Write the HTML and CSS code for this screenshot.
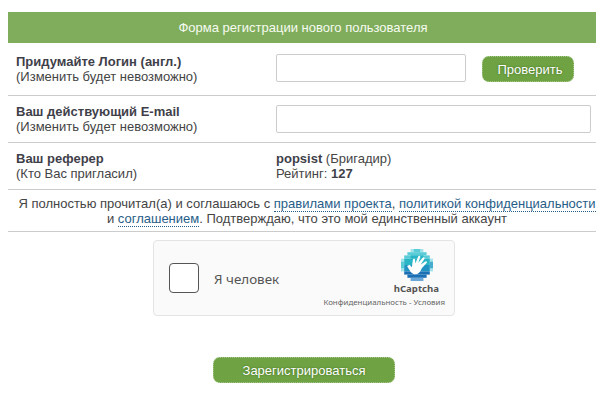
FILE: index.html
```html
<!DOCTYPE html>
<html lang="ru">
<head>
<meta charset="utf-8">
<title>Регистрация</title>
<link rel="stylesheet" href="styles.css">
</head>
<body>
<form class="form">
  <div class="title">Форма регистрации нового пользователя</div>
  <div class="row row-login">
    <div class="label"><b>Придумайте Логин (англ.)</b><br>(Изменить будет невозможно)</div>
    <div class="field field-login">
      <input class="input input-short" type="text">
      <button class="btn btn-check" type="button">Проверить</button>
    </div>
  </div>
  <div class="row row-mail">
    <div class="label"><b>Ваш действующий E-mail</b><br>(Изменить будет невозможно)</div>
    <div class="field"><input class="input input-long" type="text"></div>
  </div>
  <div class="row row-ref">
    <div class="label"><b>Ваш реферер</b><br>(Кто Вас пригласил)</div>
    <div class="value"><b>popsist</b> (Бригадир)<br>Рейтинг: <b>127</b></div>
  </div>
  <div class="agree">Я полностью прочитал(а) и соглашаюсь с <a href="#">правилами проекта</a>, <a href="#">политикой конфиденциальности</a><br>и <a href="#">соглашением</a>. Подтверждаю, что это мой единственный аккаунт</div>
  <div class="captcha">
    <span class="check"></span>
    <span class="human">Я человек</span>
    <div class="brand">
      <svg class="logo" viewBox="0 0 10 10" width="32" height="32" aria-hidden="true">
        <g fill="#a5e3ea"><rect x="3" y="0" width="4" height="1"/><rect x="0" y="3" width="1" height="4"/><rect x="9" y="3" width="1" height="4"/></g>
        <g fill="#5accd8"><rect x="2" y="1" width="6" height="1"/><rect x="1" y="2" width="8" height="1"/><rect x="4" y="0" width="2" height="1"/><rect x="0" y="4" width="1" height="2"/></g>
        <g fill="#28b5c6"><rect x="1" y="3" width="8" height="2"/><rect x="3" y="2" width="4" height="1"/></g>
        <g fill="#1f93c2"><rect x="1" y="5" width="8" height="2"/><rect x="9" y="4" width="1" height="2" opacity=".7"/></g>
        <g fill="#1a6fb5"><rect x="1" y="7" width="8" height="1"/><rect x="2" y="8" width="6" height="1"/></g>
        <rect x="3" y="9" width="4" height="1" fill="#6aa6d8"/>
        <path fill="#fff" d="M1.9 5.3 2.7 4.9 3.4 5.7 3.7 3.4C3.8 2.9 4.4 3 4.4 3.5L4.5 4.5 5.4 2.3C5.6 1.9 6.2 2.1 6 2.6L5.4 4.3 6.8 2.7C7.1 2.4 7.6 2.75 7.3 3.1L6.1 4.9 7.6 3.9C8 3.65 8.3 4.1 8 4.4L6.5 6C6 7.4 5 8.2 3.9 7.8 3.1 7.5 2.8 6.8 2.4 6.2Z"/>
      </svg>
      <div class="brand-name">hCaptcha</div>
      <div class="brand-links">Конфиденциальность - Условия</div>
    </div>
  </div>
  <div class="submit"><button class="btn btn-submit" type="button">Зарегистрироваться</button></div>
</form>
</body>
</html>
```
FILE: styles.css
```css
html, body { margin: 0; padding: 0; background: #fff; }
body { width: 607px; height: 403px; overflow: hidden; }
.form {
  margin: 12px 11px 0 8px;
  font: 13px/15px "Liberation Sans", Arial, sans-serif;
  color: #444;
}
.title {
  height: 31px;
  line-height: 31px;
  padding-left: 2px;
  background: #80ad5c;
  color: #f6fbf0;
  text-align: center;
}
.row {
  display: grid;
  grid-template-columns: 260px 1fr;
  align-items: center;
  padding-left: 8px;
  border-bottom: 1px solid #ccc;
  box-sizing: border-box;
}
.row-login { height: 53px; }
.row-mail, .row-ref { height: 47px; }
.label b, .value b { color: #3f3f4a; }
.field { display: flex; align-items: center; }
.field-login { margin-bottom: 2px; }
.input {
  box-sizing: border-box;
  height: 28px;
  margin: 0;
  padding: 0 6px;
  border: 1px solid #ccc;
  border-radius: 2px;
  background: #fff;
}
.input-short { width: 190px; }
.input-long { width: 315px; }
.btn {
  box-sizing: border-box;
  height: 26px;
  padding: 0;
  border: 1px dotted #a9c98e;
  border-radius: 7px;
  background: #6ea243;
  color: #fff;
  font: 13px/15px "Liberation Sans", Arial, sans-serif;
  text-shadow: 0 0 2px #3f6a20;
}
.btn-check { width: 92px; margin: 2px 0 0 16px; padding-left: 4px; }
.agree {
  height: 42px;
  box-sizing: border-box;
  padding: 6px 0 0 10px;
  border-bottom: 1px solid #ccc;
  text-align: center;
  white-space: nowrap;
}
.agree a {
  color: #285d88;
  text-decoration: none;
  border-bottom: 1px dotted #285d88;
}
.captcha {
  position: relative;
  box-sizing: border-box;
  display: flex;
  align-items: center;
  width: 302px;
  height: 76px;
  margin: 8px 0 0 145px;
  padding-left: 15px;
  background: #fafafa;
  border: 1px solid #e4e4e4;
  border-radius: 4px;
  font-family: "Noto Sans", sans-serif;
}
.check {
  box-sizing: border-box;
  width: 30px;
  height: 30px;
  background: #fff;
  border: 1px solid #555;
  border-radius: 4px;
}
.human { margin: 2px 0 0 15px; font-size: 13.4px; color: #555; }
.brand {
  position: absolute;
  right: 9px;
  top: 8px;
  display: flex;
  flex-direction: column;
  align-items: flex-end;
}
.logo { display: block; margin-right: 12px; }
.brand-name {
  margin-right: 6px;
  font-size: 9.6px;
  line-height: 16px;
  font-weight: 700;
  color: #555;
}
.brand-links {
  font-size: 7.9px;
  line-height: 11px;
  color: #666;
  white-space: nowrap;
}
.submit { margin: 41px 0 0 205px; }
.btn-submit { width: 182px; display: block; }
```
